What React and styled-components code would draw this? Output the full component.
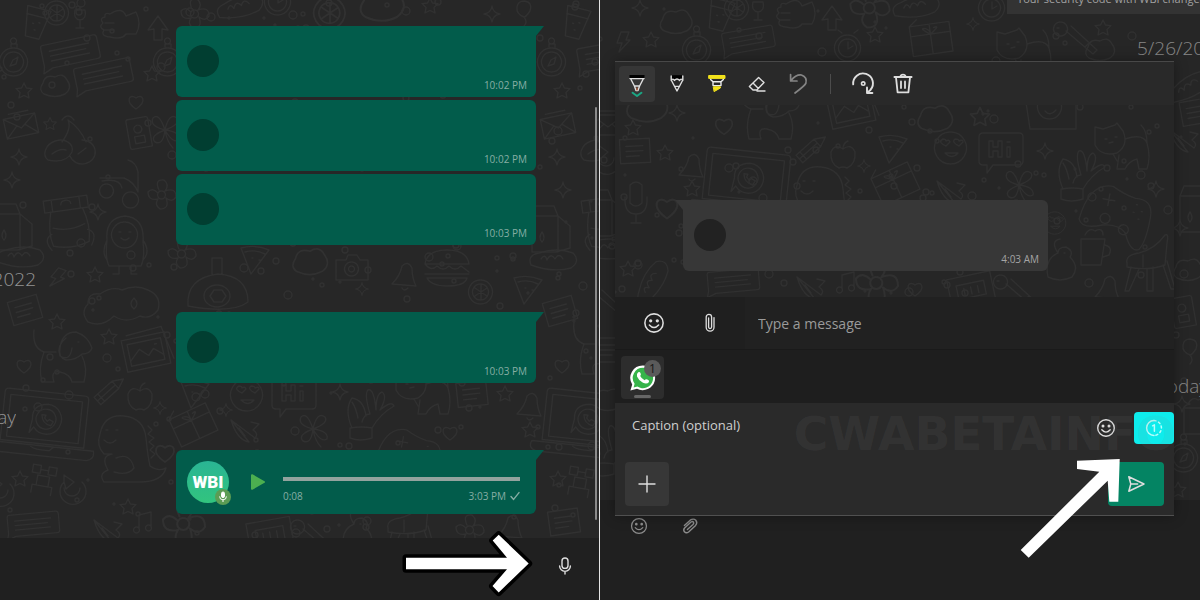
import React from "react";
import styled, { createGlobalStyle, css } from "styled-components";

const GlobalStyle = createGlobalStyle`
  * {
    box-sizing: border-box;
  }
  body {
    margin: 0;
    background: #272727;
    font-family: "Open Sans", "Noto Sans", sans-serif;
    color: #d4d4d4;
  }
  button,
  input {
    font: inherit;
    color: inherit;
    border: 0;
    margin: 0;
    padding: 0;
    background: none;
  }
  svg {
    display: block;
  }
`;

/* ---------- page ---------- */

const Page = styled.main`
  display: grid;
  grid-template-columns: 1fr 1fr;
  min-height: 100vh;
  overflow: hidden;
`;

const ChatPane = styled.section`
  position: relative;
  display: flex;
  flex-direction: column;
  min-width: 0;
  border-right: 1px solid #e4e4e4;
`;

const Messages = styled.div`
  position: relative;
  flex: 1;
  display: flex;
  flex-direction: column;
  padding: 26px 63px 24px 0;
  overflow: hidden;
`;

const WallpaperSvg = styled.svg`
  position: absolute;
  inset: 0;
  width: 100%;
  height: 100%;
  fill: none;
  stroke: ${p => p.$ink || "#313131"};
  stroke-width: 1.4;
  stroke-linecap: round;
  stroke-linejoin: round;
  pointer-events: none;
`;

const Scrollbar = styled.div`
  position: absolute;
  top: 107px;
  right: 2px;
  bottom: 80px;
  width: 2px;
  border-radius: 1px;
  background: #8a8a8a;
`;

/* ---------- bubbles ---------- */

const tail = css`
  &::after {
    content: "";
    position: absolute;
    top: 0;
    width: 8px;
    height: 10px;
    background: inherit;
    ${p => p.$incoming
      ? "right: 100%; clip-path: polygon(0 0, 100% 0, 100% 100%);"
      : "left: 100%; clip-path: polygon(0 0, 100% 0, 0 100%);"}
  }
`;

const Bubble = styled.article`
  position: relative;
  display: flex;
  align-items: center;
  align-self: flex-end;
  width: 360px;
  height: ${p => (p.$voice ? 64 : 71)}px;
  margin-bottom: ${p => (p.$stacked ? 3 : 0)}px;
  padding: 0 9px 0 11px;
  border-radius: 6px;
  background: ${p => (p.$incoming ? "#373737" : "#025c4b")};
  ${p => p.$tail && (p.$incoming ? "border-top-left-radius: 0;" : "border-top-right-radius: 0;")}
  ${p => p.$tail && tail}
`;

const Avatar = styled.span`
  width: 32px;
  height: 32px;
  margin-bottom: 2px;
  border-radius: 50%;
  background: ${p => (p.$incoming ? "#222222" : "#013e31")};
`;

const Time = styled.time`
  margin-left: auto;
  align-self: flex-end;
  padding-bottom: 5px;
  font-size: 10px;
  line-height: 14px;
  color: ${p => (p.$incoming ? "#a4a4a4" : "#86aea4")};
`;

const DateRow = styled.div`
  position: relative;
  display: flex;
  justify-content: flex-end;
  align-items: center;
  width: ${p => p.$visible}px;
  height: 67px;
  overflow: hidden;
  font-size: 19px;
  font-weight: 300;
  line-height: 28px;
  white-space: nowrap;
  color: #949494;
`;

const VoiceAvatar = styled.span`
  position: relative;
  display: grid;
  place-items: center;
  width: 42px;
  height: 42px;
  margin-right: 20px;
  border-radius: 50%;
  background: linear-gradient(#2ab594, #32c47e);
  color: #fff;
  font-family: Roboto, sans-serif;
  font-size: 17px;
  font-weight: 900;
`;

const MicBadge = styled.span`
  position: absolute;
  right: -2px;
  bottom: -2px;
  display: grid;
  place-items: center;
  width: 16px;
  height: 16px;
  border-radius: 50%;
  background: #5c9c54;
`;

const PlayButton = styled.button`
  width: 18px;
  height: 20px;
  margin-right: 16px;
`;

const Track = styled.div`
  flex: 1;
  display: flex;
  flex-direction: column;
  gap: 8px;
  margin-right: 7px;
  padding-top: 16px;
`;

const Seek = styled.input`
  appearance: none;
  display: block;
  width: 100%;
  height: 4px;
  background: #93a39e;
  &::-webkit-slider-thumb {
    appearance: none;
    width: 0;
    height: 0;
  }
`;

const TrackInfo = styled.div`
  display: flex;
  align-items: center;
  justify-content: space-between;
  font-size: 10px;
  line-height: 14px;
  color: #86aea4;
  span {
    display: flex;
    align-items: center;
    gap: 4px;
  }
`;

const ChatFooter = styled.footer`
  position: relative;
  display: flex;
  align-items: center;
  justify-content: flex-end;
  height: 62px;
  padding: 0 16px 6px 0;
  background: #202020;
`;

const IconButton = styled.button`
  display: grid;
  place-items: center;
  width: ${p => p.$w || 36}px;
  height: ${p => p.$h || 36}px;
  border-radius: 4px;
  background: ${p => p.$bg || "transparent"};
  color: ${p => p.$color || "#dedede"};
`;

const PointerRight = styled.svg`
  position: absolute;
  right: 63px;
  bottom: 2px;
  pointer-events: none;
`;

/* ---------- media dialog ---------- */

const MediaPane = styled.section`
  display: grid;
  min-width: 0;
  overflow: hidden;
  background: #262626;
`;

const Backdrop = styled.div`
  grid-area: 1 / 1;
  display: flex;
  flex-direction: column;
  min-width: 0;
`;

const BackdropChat = styled.div`
  position: relative;
  flex: 1;
  display: flex;
  flex-direction: column;
  align-items: flex-end;
  overflow: hidden;
`;

const Notice = styled.p`
  position: relative;
  width: 193px;
  height: 30px;
  margin: -16px 0 0;
  padding: 6px 10px;
  overflow: hidden;
  background: #333333;
  font-size: 11px;
  line-height: 18px;
  white-space: nowrap;
  color: #a2a2a2;
`;

const BackdropDate = styled(DateRow)`
  justify-content: ${p => (p.$end ? "flex-end" : "flex-start")};
  margin-top: ${p => (p.$end ? 271 : 0)}px;
  margin-right: ${p => (p.$end ? -8 : 0)}px;
  color: #868686;
`;

const BackdropFooter = styled.div`
  display: flex;
  gap: 15px;
  height: 100px;
  padding: 8px 21px;
  background: #202020;
`;

const Dialog = styled.div`
  position: relative;
  grid-area: 1 / 1;
  align-self: start;
  min-width: 0;
  margin: 61px 26px 0 15px;
  border-top: 1px solid #484848;
  border-bottom: 1px solid #505050;
  background: #1f1f1f;
  box-shadow: 0 0 12px rgba(0, 0, 0, 0.35);
`;

const Toolbar = styled.div`
  display: flex;
  align-items: center;
  gap: 4px;
  height: 43px;
  padding: 0 4px;
  background: #292929;
`;

const ToolDivider = styled.span`
  width: 1px;
  height: 20px;
  margin: 0 10px 0 11px;
  background: #4c4c4c;
`;

const Canvas = styled.div`
  position: relative;
  display: flex;
  height: 192px;
  padding: 95px 0 0 68px;
  overflow: hidden;
  background: #262626;
  ${Bubble} {
    align-self: flex-start;
    width: 365px;
  }
`;

const Composer = styled.div`
  display: flex;
  align-items: center;
  height: 53px;
  padding-left: 11px;
  border-bottom: 1px solid #1a1a1a;
`;

const MessageInput = styled.input`
  flex: 1;
  min-width: 0;
  height: 52px;
  margin-left: 7px;
  padding-left: 13px;
  background: #212121;
  font-size: 14px;
  line-height: 20px;
  &::placeholder {
    color: #9a9a9a;
    opacity: 1;
  }
`;

const Taskbar = styled.div`
  height: 53px;
  padding: 6px;
  background: #1e1e1e;
`;

const TaskItem = styled.button`
  position: relative;
  display: grid;
  place-items: center;
  width: 43px;
  height: 43px;
  border-radius: 4px;
  background: #2d2d2d;
  &::after {
    content: "";
    position: absolute;
    bottom: 1px;
    left: 13px;
    width: 17px;
    height: 3px;
    border-radius: 2px;
    background: #666;
  }
`;

const Count = styled.span`
  position: absolute;
  top: 4px;
  right: 3px;
  width: 17px;
  height: 17px;
  border-radius: 50%;
  background: #5a5a5a;
  color: #151515;
  font-size: 12px;
  line-height: 17px;
  text-align: center;
`;

const CaptionArea = styled.div`
  position: relative;
  padding-bottom: 9px;
  background: #2a2a2a;
`;

const CaptionRow = styled.div`
  display: flex;
  align-items: flex-start;
  height: 59px;
  padding: 9px 0 0 17px;
`;

const CaptionInput = styled.input`
  flex: 1;
  min-width: 0;
  height: 26px;
  font-size: 13px;
  line-height: 20px;
  &::placeholder {
    color: #cfcfcf;
    opacity: 1;
  }
`;

const ActionRow = styled.div`
  display: flex;
  justify-content: space-between;
  padding: 0 10px;
`;

const Watermark = styled.span`
  position: absolute;
  top: 3px;
  right: -2px;
  font-family: "DejaVu Sans", sans-serif;
  font-size: 47px;
  font-weight: 700;
  line-height: 56px;
  color: rgba(130, 130, 130, 0.11);
  pointer-events: none;
`;

const PointerUp = styled.svg`
  position: absolute;
  right: 48px;
  bottom: -49px;
  pointer-events: none;
`;

/* ---------- wallpaper ---------- */

const STAR = "M0-8 2.4-3 8-2.4 4 1.6 5 7 0 4.4-5 7-4 1.6-8-2.4-2.4-3Z";
const SPARK = "M0-8Q1-1 8 0Q1 1 0 8Q-1 1-8 0Q-1-1 0-8Z";

const motifs = {
  star: STAR,
  spark: SPARK,
  heart: "M0 7C-12-1-6-9 0-4C6-9 12-1 0 7Z",
  glass: "M-12-14 12-14 7 16-7 16ZM-11-6 11-6M-3 2h1M3 0h1M0 8h1",
  lemon: "M0-12A12 12 0 1 1-1-12M0-8A8 8 0 1 1-1-8M0-7V7M-6-4 6 4M6-4-6 4",
  wine: "M-5-8Q-7 1 0 2Q7 1 5-8ZM0 2V10M-4 10H4",
  fist: "M-10-10Q2-18 6-8L16-12Q22 0 16 10L6 10Q2 16-10 13Q-20 12-16 6Q-22 3-17-1Q-21-6-15-7Q-16-12-10-10ZM-15-1H-6M-15 6H-6",
  lines: "M-26-12H26Q29-12 29-9V9Q29 12 26 12H-20L-30 16-28 9V-9Q-28-12-26-12ZM-20-5H20M-20 0H16M-20 5H19",
  compass: "M0-14A14 14 0 1 1-1-14M0-10A10 10 0 1 1-1-10M-4 4-1-2 4-5 2 2ZM-3-15V-18H3V-15M0-24A3 3 0 1 1-1-24",
  cloud: "M-11 8Q-17 4-12-3Q-10-12 0-9Q8-14 12-6Q18 2 10 8Q0 13-11 8Z",
  envelope: "M-16-10H16V10H-16ZM-16-10 0 2 16-10M-16 10-4-1M16 10 4-1M-10-14H10",
  cherry: "M-18 14A14 11-20 1 1 6 6Q0 18-18 14ZM4 10A13 12 0 1 0 16-6M-4-4Q6-18 2-26Q14-18 20-4M-14 8Q-6 2 0 4M12 8 20 2M-4-26Q2-34 8-26",
  card: "M-9-15H9Q11-15 11-13V15H-9Q-11 15-11 13V-13Q-11-15-9-15ZM-5 3H5V10H-5ZM0-8A4 4 0 1 1-1-8",
  scooter: "M-20-4H4Q14 0 18 10V-10Q16-20 8-22M-14 2A7 7 0 1 0-13 2M10 10A8 8 0 1 0 11 10M-18-1Q0-4 2 6",
  backpack: "M-22-22H22V-10H-22ZM-16-10Q-22 10-18 24Q0 30 18 24Q22 8 16-10M-16 6Q0 12 16 6M-18 12Q-28 16-20 28M18 12Q28 16 20 28M-5-16A5 4 0 0 1 5-16M-14-22V-10M14-22V-10",
  kid: "M0-24Q20-22 18 2Q20 18 16 26H-16Q-20 18-18 0Q-20-22 0-24ZM0-18A13 13 0 1 1-1-18M-6-8h2M4-8h2M-4-2Q0 2 4-2M-18 0Q-24 12-18 20M18 0Q26 12 18 20M-6 26V34H-12M6 26V34H12",
  carton: "M-18-10H8L20 0V22L6 26H-18ZM-18-10-14-20H4L8-10V26M-8 6Q-12 12-8 16Q-4 12-8 6Z",
  bread: "M-22 4Q-26-6-14-8Q4-14 20-8Q28 0 18 7Q0 12-22 4ZM-12-2Q-8-8-6-1Q-2-9 2-2Q6-9 10-2",
  bolt: "M-2-10H6L3-2H7L-4 10-1 1H-6Z",
  flower: "M0-4A4 4 0 1 1-1-4M-3-5Q-8-16 2-15Q8-10 3-4Q14-8 14 2Q10 8 4 3Q8 14-2 14Q-8 10-4 4Q-14 6-14-3Q-10-8-4-2",
  helmet: "M-30 14Q-32-14 0-18Q30-16 30 10Q14 22-30 14ZM-14 4A13 11 0 1 0 12 4A13 11 0 1 0-14 4M-4-2 4-2 8 4 4 10-4 10-8 4ZM-6-18V-34H4V-18",
  camera: "M-16-8H-6L-4-13H5L8-8H16V12H-16ZM0-6A7 7 0 1 1-1-6M0-2A3 3 0 1 1-1-2",
  burger: "M-22-4Q-20-18 0-18Q20-18 22-4ZM-22-4Q-16 4-10-2Q-4 4 2-2Q8 4 14-2L22 4M-22 6H22M-20 10Q-16 18 0 18Q18 18 20 10Z",
  bell: "M-12 8Q-4 0-2-10Q4-16 8-8Q8 2 12 10ZM-2 12Q0 16 4 12",
  pizza: "M-14-10Q0-14 14-8L-4 16ZM-10-6Q0-9 10-4M-3 0h1M4 2h1",
  balloon: "M0-9Q9-8 6 1Q2 7 0 7Q-8 4-7-3Q-6-9 0-9ZM0 7Q4 12 0 16",
  note: "M-15-12H15V12H-15ZM-9-5H8M-9 0H8M-9 5H4",
  bear: "M-34 16Q-42 6-34-2Q-34-14-22-12Q-10-20 0-16Q14-22 26-16Q40-10 36 4Q28 14 18 10Q4 18-8 10Q-20 22-34 16ZM12-8Q6-2 12 3Q18-2 12-8Z",
  dog: "M-28-28Q-30-10-18-6H-6M-2-10Q0-26 14-26Q26-22 30-10Q28-4 20-4Q14 2 4 2Q-4 0-2-10ZM4-20Q-6-12-2-2Q8 4 10-10M-18-6Q-24 10-20 24H-8Q-12 12-2 14Q8 16 10 24H22Q26 10 20-2M16-16h1",
  photo: "M-22-16H22V16H-22ZM-17-11H17V11H-17ZM-17 6-6-4 2 4 8-2 17 6M10-6h2M-16-20 20-22 26 12",
  pencil: "M-16 4H8L18 0 8-6H-16ZM8-6V4M-11-6V4M-16-1H8",
  apple: "M0-7Q8-13 12-4Q13 8 4 12Q0 10-4 12Q-13 8-12-4Q-8-13 0-7ZM0-7Q0-13 5-15",
  laptop: "M-38-32H38Q42-32 42-28V20H-42V-28Q-42-32-38-32ZM-36-26H36V16H-36ZM-52 22H52Q54 30 46 32H-46Q-56 30-52 22ZM-12 22Q-10 26 0 26H8L12 22M2-20A15 15 0 1 1-10 4L-14 10-12-4Q-14-18 2-20ZM2-15A10 10 0 1 1 1-15M-3-9Q-2 0 7 1L9-3 5-5 3-3 0-6 1-9Z",
  dino: "M-30-14Q-26-34-6-32Q14-30 16-10Q18 10 20 18Q28 24 36 20Q32 34 10 34H-26Q-32 26-22 22Q-30 8-18 6H-26Q-34-2-30-14ZM-24-18h2M-14-18h2M-26-8Q-20-2-14-8M18-22 22-18 18-14 24-10 19-6 24-2 20 2 25 6 21 10M-14 10Q0 4 4 20Q-2 28-16 24",
  emoji: "M0-16A16 16 0 1 1-1-16M-5-2Q-14-6-8-9Q-5-9-5-7Q-2-9-1-6ZM8-2Q0-6 4-9Q8-9 8-7Q12-9 12-6ZM-6 5Q1 12 7 5Z",
  hi: "M-18-16H18Q22-16 22-12V12Q22 16 18 16H-8L-14 24V16H-18Q-22 16-22 12V-12Q-22-16-18-16ZM-12-8V8H-8V2H-3V8H1V-8H-3V-2H-8V-8ZM6-2H9V8H6ZM6-7H9",
  clover: "M0 0Q-16-4-12-12Q-6-18 0 0Q4-18 12-12Q16-6 0 0Q16 2 14 10Q8 14 0 0Q-2 16-10 12Q-16 6 0 0M0 0Q2 12 8 18",
  plant: "M-16 24V14Q-4 12 6 14V24Q-6 28-16 24ZM-14 14Q-22-4-14-16Q-2-14 0 2M6 14Q14 0 28-8Q26-14 14-4Q22-18 16-22Q10-20 10-4Q8-26 2-24Q-2-20 4 0Q-2 0-4 8M-14-12Q-10-6-8 4",
  gamepad: "M-34 14Q-30-24-6-24Q6-18 18-16Q36-18 36 0Q36 26 30 34Q22 38 14 20Q6 12-10 16Q-30 24-34 14ZM-8-16V-4M-14-10H-2M-8 4A5 5 0 1 1-9 4M12 12A5 5 0 1 1 11 12M20-10h1M26-4h1M18-2h1M24 4h1",
  cat: "M-28-20-20-18-8-22-6-24 0-16Q6-2-6 6Q-22 10-28-2ZM-18-8h2M-8-10h2M-14-4-10-5M2-8Q20-14 24-4Q24-16 18-22M24-4Q28 10 24 22H16L14 12Q6 14 2 22H-6L-4 8M-10 7-6 14",
  gift: "M-20-14H20V16H-20ZM-20-4H20M0-14V16M0-4Q-12-12-4-10Q0-8 0-4Q12-12 4-10M-20-14-12-20",
  drone: "M-12-14H-4V-6H-12ZM4-14H12V-6H4ZM-6-4H6V6H-6ZM-10 14V6H10V14M-4-10H4",
  rotate: "M-8-8A13 13 0 1 0 10-8M-8-2A7 7 0 1 0 8-2M-8-8V-15L2-8-6-1Z",
  music: "M-6 6A3 3 0 1 1-7 6M6 4A3 3 0 1 1 5 4M-4 8V-6L8-9V6",
  horn: "M-14-10 10 8Q14 4 8 0L14-6 6-8M-14-10Q-8 10 4 12ZM-6-2 0 6",
  mug: "M-12-12H12L8 14H-12ZM12-6Q20-4 16 4L10 6M-8-16Q-4-24 2-20Q10-24 10-16",
  chair: "M-22 0Q-24-8-10-10Q6-14 16-28Q20-30 18-20L16 2Q0 8-22 4ZM-18 4-24 28H-20L-10 6M-2 6V28H4V4M14 2 22 26H26L18-2M-6-8V4",
  key: "M-14-14A7 7 0 1 1-15-14M-9-5 18 18 22 14-4-10M10 11 14 7M-18-8h2",
  clock: "M0-13A13 13 0 1 1-1-13M0-9A9 9 0 1 1-1-9M0-6V1L5-2M-6-15-10-18M6-15 10-18",
  choco: "M-22-14H22V16H-22ZM-14-6H14V8H-14ZM-7-2V5M0-2V5M7-2V5",
  whale: "M-26-26H26V14H10L-20 14ZM0-20A12 12 0 1 1-1-20M-5-12h2M4-12h2M-5-4Q0 2 6-5M-26-26-20 14",
  mic: "M-6-16Q0-22 6-16V2Q0 8-6 2ZM-11-4Q-12 13 0 13Q12 13 11-4M0 13V22M-5 22H5",
  up: "M-10 4 0-10 10 4 4 3V14H-4V3Z",
  squirrel: "M-14 14Q-18-4-4-10Q-4-16 4-16Q12-12 8-6Q18 4 10 14Q-2 20-14 14ZM2-10h1M-4-10Q-12-22-2-24",
};

// [motif, x, y, rotation, scale]
const leftDoodles = [
  ["glass", 36, 22, 14], ["lemon", 57, 13], ["wine", 80, 18], ["fist", 120, 24], ["lines", 70, 52, -12],
  ["lines", 103, 75, -12], ["compass", 14, 62], ["cloud", 55, 86], ["star", 24, 91], ["star", 152, 74],
  ["heart", 136, 102], ["envelope", 21, 126, -12], ["star", 50, 124, 0, 0.8], ["cherry", 66, 146], ["card", 139, 133, -10],
  ["spark", 19, 157], ["spark", 12, 180], ["scooter", 120, 182], ["spark", 98, 212], ["backpack", 68, 220, -8],
  ["kid", 125, 240], ["carton", 12, 224], ["bread", 20, 258], ["bolt", 57, 278, 20], ["star", 95, 275],
  ["flower", 182, 254], ["helmet", 218, 292], ["pizza", 255, 258], ["camera", 352, 268],
  ["up", 158, 26], ["flower", 195, 14], ["bread", 240, 8, -15], ["clock", 278, 2], ["lemon", 330, 13, 0, 1.3],
  ["cloud", 382, 5, 0, 1.5], ["star", 430, 6], ["spark", 492, 14], ["balloon", 524, 10], ["glass", 576, 22, 14],
  ["compass", 552, 62], ["star", 562, 91], ["lines", 606, 56, -10], ["envelope", 558, 126, -12], ["spark", 557, 157],
  ["cherry", 602, 146], ["spark", 563, 190], ["carton", 550, 226], ["backpack", 606, 220, -8], ["bread", 553, 261],
  ["burger", 447, 268], ["bell", 404, 276], ["spark", 362, 289, 0, 0.8], ["compass", 168, 62], ["clover", 165, 130],
  ["flower", 162, 195], ["lemon", 481, 292], ["pizza", 528, 288], ["cloud", 310, 262, 0, 1.2],
  ["note", 25, 310, -16], ["bear", 122, 306], ["star", 57, 322], ["dog", 62, 358], ["star", 109, 337],
  ["heart", 24, 366], ["photo", 146, 352, -12], ["pencil", 110, 391, -42], ["apple", 140, 398], ["laptop", 44, 424, 6],
  ["dino", 130, 448], ["emoji", 247, 395], ["hi", 294, 393], ["clover", 313, 429], ["plant", 366, 414],
  ["gamepad", 408, 452, 10, 0.9], ["cat", 424, 392], ["note", 472, 394, -6], ["star", 505, 394], ["bell", 529, 406],
  ["star", 530, 430], ["laptop", 586, 424, 6], ["gift", 193, 424, -25], ["spark", 160, 408, 0, 0.8], ["spark", 226, 410, 0, 0.8],
  ["heart", 165, 453, 0, 1.3], ["star", 20, 479], ["drone", 43, 480, 10], ["rotate", 72, 490], ["lines", 33, 524, -5, 0.9],
  ["star", 128, 507], ["music", 143, 521], ["horn", 108, 530], ["flower", 184, 524, 0, 1.5], ["choco", 270, 534, -10],
  ["key", 312, 534], ["chair", 410, 528], ["squirrel", 358, 534], ["flower", 470, 530],
  ["note", 564, 522, -8], ["star", 558, 479], ["drone", 580, 482, 10], ["note", 560, 311, -16], ["dog", 602, 350],
  ["heart", 562, 366], ["pizza", 195, 392], ["horn", 245, 430], ["spark", 340, 392], ["heart", 450, 433],
  ["rotate", 0, 492], ["bell", 510, 528],
];

const rightDoodles = [
  ["spark", 40, 8], ["glass", 120, 14, 14], ["lemon", 137, 8], ["wine", 158, 10], ["cloud", 76, 22, 0, 1.1],
  ["bolt", 23, 42], ["star", 51, 40], ["fist", 196, 14], ["compass", 97, 50], ["lines", 148, 40, -10, 0.9],
  ["up", 232, 16], ["clock", 248, 48], ["star", 275, 35], ["flower", 270, 8, 0, 1.4], ["gift", 331, 38, -8],
  ["cat", 425, 52], ["key", 475, 36], ["star", 503, 28], ["clock", 392, 8], ["bread", 316, 8, -10],
  ["spark", 373, 24, 0, 0.8], ["cloud", 500, 50], ["note", 596, 112, -10], ["bread", 590, 88, -30],
  ["horn", 584, 140], ["carton", 598, 206], ["spark", 580, 228], ["cloud", 588, 270], ["card", 583, 312, -10],
  ["balloon", 590, 348], ["compass", 584, 458], ["mug", 596, 420], ["spark", 582, 404], ["star", 578, 490],
  ["envelope", 8, 125], ["rotate", 6, 160], ["carton", 4, 210], ["bread", 6, 250], ["key", 6, 300],
  ["note", 8, 350], ["cloud", 8, 400], ["plant", 8, 450],
];

// drawn behind the picture that is being edited, origin at the canvas corner
const canvasDoodles = [
  ["cloud", 32, 2, 0, 1.4], ["star", 18, 23], ["note", 20, 46, -3], ["star", 50, 48], ["spark", 62, 8],
  ["heart", 109, 21, 0, 1.2], ["dog", 154, 10], ["laptop", 131, 78, 6], ["bell", 76, 62], ["star", 77, 84],
  ["mic", 21, 96], ["pencil", 197, 44, -42], ["apple", 228, 51], ["photo", 236, 4, -12], ["dino", 212, 94],
  ["pizza", 278, 42], ["gift", 280, 78, -25], ["emoji", 336, 43], ["hi", 386, 44], ["spark", 249, 61, 0, 0.8],
  ["cloud", 320, 14, 0, 1.2], ["star", 365, 12, 0, 1.2], ["whale", 435, 10], ["cat", 508, 42], ["clover", 404, 80],
  ["plant", 462, 70], ["gamepad", 500, 106, 10], ["mug", 478, 146], ["chair", 534, 158], ["squirrel", 447, 158],
  ["emoji", 440, 118, 0, 0.7], ["spark", 541, 84], ["spark", 430, 46], ["lines", 118, 176, -5, 0.9], ["horn", 196, 182],
  ["music", 231, 176], ["flower", 262, 178, 0, 1.5], ["choco", 356, 184, -12], ["bell", 492, 184],
  ["star", 13, 164], ["bread", 38, 178, -60], ["heart", 52, 103, 0, 1.5], ["horn", 336, 86],
  ["key", 400, 184], ["heart", 300, 184],
];

const scatter = (count, width, height, seed) => {
  let s = seed;
  const next = () => {
    s = (s * 16807) % 2147483647;
    return s / 2147483647;
  };
  return Array.from({ length: count }, () => ({
    x: Math.round(next() * width),
    y: Math.round(next() * height),
    r: 1 + Math.round(next() * 3),
  }));
};

const Wallpaper = ({ items, dots, ink }) => (
  <WallpaperSvg $ink={ink} aria-hidden="true">
    {items.map(([name, x, y, rot = 0, scale = 1], i) => (
      <path
        key={i}
        d={motifs[name]}
        transform={`translate(${x} ${y}) rotate(${rot}) scale(${scale})`}
      />
    ))}
    {dots.map((d, i) => (
      <circle key={i} cx={d.x} cy={d.y} r={d.r} />
    ))}
  </WallpaperSvg>
);

const leftDots = scatter(230, 600, 540, 77);
const rightDots = scatter(130, 600, 500, 31);
const canvasDots = scatter(90, 560, 192, 53);

/* ---------- icons ---------- */

const Icon = ({ size = 20, children, ...rest }) => (
  <svg
    width={size}
    height={size}
    viewBox={`0 0 ${size} ${size}`}
    fill="none"
    stroke="currentColor"
    strokeWidth="1.4"
    strokeLinecap="round"
    strokeLinejoin="round"
    aria-hidden="true"
    {...rest}
  >
    {children}
  </svg>
);

const SmileIcon = ({ size = 20 }) => (
  <Icon size={size} viewBox="0 0 20 20">
    <circle cx="10" cy="10" r="8.3" />
    <circle cx="7" cy="8" r="0.8" fill="currentColor" />
    <circle cx="13" cy="8" r="0.8" fill="currentColor" />
    <path d="M5.8 11.8Q10 16.4 14.2 11.8" />
  </Icon>
);

const ClipIcon = () => (
  <Icon strokeWidth="1.3">
    <path d="M6.2 4.8V14.2a3.9 3.9 0 0 0 7.8 0V4.6M6.2 4.8V4a2.7 2.7 0 0 1 5.4 0V14a1.5 1.5 0 0 1-3 0V5" />
  </Icon>
);

const SlantClipIcon = () => (
  <Icon size={18}>
    <path d="M3.4 8.6 9.2 3.2Q12.4 1 14.8 3.2Q16.8 5.8 14.6 8.4L7.6 15Q5.2 16.6 3.4 14.8Q2 12.8 3.6 11L10 5Q11.8 4 12.6 5.4Q13 6.6 12 7.6L6.4 12.6" />
  </Icon>
);

const MicIcon = () => (
  <Icon>
    <rect x="7" y="2" width="6" height="10.4" rx="3" />
    <path d="M4.6 10a5.4 5.4 0 0 0 10.8 0M10 15.4V18" />
  </Icon>
);

const PenIcon = () => (
  <Icon size={26}>
    <path d="M6 7.5H20M7 8.5 10.4 15H15.6L19 8.5M10.4 15 12 19.6H14L15.6 15" stroke="#e0e0e0" />
    <path d="M5.5 5.5H20.5" stroke="#000" strokeWidth="3" strokeLinecap="butt" />
    <path d="M13 17v2" stroke="#b06040" />
    <path d="M8.6 21.8 13 25 17.4 21.8" stroke="#1aa784" strokeWidth="2" />
  </Icon>
);

const PencilIcon = () => (
  <Icon size={26}>
    <path d="M7.6 4.2H18.4V8H7.6Z" fill="#000" stroke="none" />
    <path d="M7.2 5V9L13 20 18.8 9V5M7.2 9.4Q9 6.8 10.4 9.4Q13 6.8 15.6 9.4Q17 6.8 18.8 9.4M10.6 15.4H15.4" stroke="#e0e0e0" />
  </Icon>
);

const MarkerIcon = () => (
  <Icon size={26}>
    <path d="M5 4.5H21V7.4H5Z" fill="#f2e21b" stroke="#f2e21b" strokeWidth="1" />
    <path d="M6.6 8.4 9 10.8V14.6H17V10.8L19.4 8.4M9 10.8H17" stroke="#ececec" />
    <path d="M9.6 15.8H16.4V17L10.4 20.4Z" fill="#f2e21b" stroke="#f2e21b" strokeWidth="1" />
  </Icon>
);

const EraserIcon = () => (
  <Icon size={22}>
    <path d="M12.6 4.4 18 9.6 10.8 17H7L3.4 13.4ZM7 10 12.4 15.4M11 18H19" />
  </Icon>
);

const UndoIcon = () => (
  <Icon size={24} strokeWidth="1.7">
    <path d="M5.6 2.6V9H12M6 8.6Q11 2.4 16.4 3Q22.6 5.2 20.8 11.4Q20 13.6 10 21" />
  </Icon>
);

const RotateIcon = () => (
  <Icon size={26} strokeWidth="1.9">
    <path d="M3.2 13.4A9.9 9.9 0 1 1 20.4 19L17.4 21.6M17 16.4V22H22.4" />
    <circle cx="13.2" cy="12.6" r="1.7" strokeWidth="1.6" />
  </Icon>
);

const TrashIcon = () => (
  <Icon size={24} strokeWidth="1.8">
    <path d="M3.4 5H20.6M5 5.4 6.6 20.4H17.4L19 5.4M9.4 4.6Q9.8 2.6 12 2.6Q14.2 2.6 14.6 4.6M10 9.4V16M14 9.4V16" />
  </Icon>
);

const SendIcon = () => (
  <Icon size={20} strokeWidth="1.5">
    <path d="M2.8 2.8 18 10 2.8 17.2 4.8 10ZM4.8 10H11.6" />
  </Icon>
);

const OnceIcon = () => (
  <Icon size={18} strokeWidth="1.5">
    <path d="M9 1.6A7.4 7.4 0 0 0 9 16.4" />
    <path d="M9 1.6A7.4 7.4 0 0 1 9 16.4" strokeDasharray="2 2.8" />
    <path d="M7.6 6.8 9.4 5.8V12.2" />
  </Icon>
);

const WhatsAppIcon = () => (
  <Icon size={28}>
    <path d="M14 1.4A12.4 12.4 0 1 1 8 24.8L1.4 26.6 3.2 20.4A12.4 12.4 0 0 1 14 1.4Z" fill="#fff" stroke="none" />
    <path d="M14 3.8A10.2 10.2 0 1 1 8.4 22.6L4.6 23.6 5.6 19.8A10.2 10.2 0 0 1 14 3.8Z" fill="#36b44a" stroke="none" />
    <path d="M9.2 8.2Q10.8 7.4 11.6 9.2Q12.4 10.8 11.2 12Q12.6 14.8 15.6 16.2Q16.8 14.8 18.4 15.6Q20.6 16.6 20 18Q18 20.6 14 18.8Q9.6 16.4 8 12.4Q7.4 9.4 9.2 8.2Z" fill="#fff" stroke="none" />
  </Icon>
);

/* ---------- app ---------- */

const tools = [
  { label: "Pen", icon: <PenIcon />, active: true },
  { label: "Pencil", icon: <PencilIcon /> },
  { label: "Highlighter", icon: <MarkerIcon /> },
  { label: "Eraser", icon: <EraserIcon /> },
  { label: "Undo", icon: <UndoIcon />, muted: true },
];

const Message = ({ time, incoming, hasTail, stacked }) => (
  <Bubble $incoming={incoming} $tail={hasTail} $stacked={stacked}>
    <Avatar $incoming={incoming} />
    <Time $incoming={incoming}>{time}</Time>
  </Bubble>
);

const VoiceMessage = () => (
  <Bubble $voice $tail>
    <VoiceAvatar>
      WBI
      <MicBadge>
        <svg width="12" height="12" viewBox="0 0 12 12" fill="none" stroke="#fff">
          <rect x="4.5" y="1" width="3" height="5.6" rx="1.5" fill="#fff" />
          <path d="M2.6 5.4a3.4 3.4 0 0 0 6.8 0M6 9V11" />
        </svg>
      </MicBadge>
    </VoiceAvatar>
    <PlayButton aria-label="Play voice message">
      <svg width="18" height="20" viewBox="0 0 18 20">
        <path d="M3 3.2 15 10 3 16.8Z" fill="#4caf50" stroke="#4caf50" strokeWidth="2" strokeLinejoin="round" />
      </svg>
    </PlayButton>
    <Track>
      <Seek type="range" min="0" max="8" defaultValue="0" aria-label="Seek" />
      <TrackInfo>
        <span>0:08</span>
        <span>
          3:03 PM
          <Icon size={10}>
            <path d="M1 5.6 3.6 8.4 9 1.6" />
          </Icon>
        </span>
      </TrackInfo>
    </Track>
  </Bubble>
);

const Conversation = () => (
  <ChatPane>
    <Messages>
      <Wallpaper items={leftDoodles} dots={leftDots} />
      <Message time="10:02 PM" hasTail stacked />
      <Message time="10:02 PM" stacked />
      <Message time="10:03 PM" />
      <DateRow $visible={36}>2022</DateRow>
      <Message time="10:03 PM" hasTail />
      <DateRow $visible={16}>ay</DateRow>
      <VoiceMessage />
    </Messages>
    <Scrollbar />
    <ChatFooter>
      <IconButton aria-label="Record voice message">
        <MicIcon />
      </IconButton>
      <PointerRight width="136" height="70" viewBox="400 528 136 70" aria-hidden="true">
        <path
          d="M406 557.7H507L492.7 540.5 498.7 534.7 528.7 563.5 498.7 592.5 492.5 586 507 569.3H406Z"
          fill="#fff"
          stroke="#000"
          strokeWidth="7"
          strokeLinejoin="round"
          paintOrder="stroke"
        />
      </PointerRight>
    </ChatFooter>
  </ChatPane>
);

const MediaEditor = () => (
  <MediaPane>
    <Backdrop>
      <BackdropChat>
        <Wallpaper items={rightDoodles} dots={rightDots} ink="#303030" />
        <Notice>Your security code with WBI changed</Notice>
        <BackdropDate $visible={63}>5/26/2022</BackdropDate>
        <BackdropDate $visible={38} $end>Today</BackdropDate>
      </BackdropChat>
      <BackdropFooter>
        <IconButton aria-label="Emoji" $color="#8c8c8c">
          <SmileIcon size={18} />
        </IconButton>
        <IconButton aria-label="Attach" $color="#8c8c8c">
          <SlantClipIcon />
        </IconButton>
      </BackdropFooter>
    </Backdrop>

    <Dialog>
      <Toolbar>
        {tools.map(t => (
          <IconButton
            key={t.label}
            aria-label={t.label}
            $bg={t.active ? "#363636" : undefined}
            $color={t.muted ? "#858585" : undefined}
          >
            {t.icon}
          </IconButton>
        ))}
        <ToolDivider />
        <IconButton aria-label="Rotate"><RotateIcon /></IconButton>
        <IconButton aria-label="Delete"><TrashIcon /></IconButton>
      </Toolbar>

      <Canvas>
        <Wallpaper items={canvasDoodles} dots={canvasDots} ink="#303030" />
        <Message time="4:03 AM" incoming hasTail />
      </Canvas>

      <Composer>
        <IconButton $w={56} aria-label="Emoji"><SmileIcon size={22} /></IconButton>
        <IconButton $w={56} aria-label="Attach"><ClipIcon /></IconButton>
        <MessageInput aria-label="Message" placeholder="Type a message" />
      </Composer>

      <Taskbar>
        <TaskItem aria-label="WhatsApp">
          <WhatsAppIcon />
          <Count>1</Count>
        </TaskItem>
      </Taskbar>

      <CaptionArea>
        <CaptionRow>
          <CaptionInput aria-label="Caption" placeholder="Caption (optional)" />
          <IconButton $w={57} $h={32} aria-label="Emoji"><SmileIcon /></IconButton>
          <IconButton $w={40} $h={32} $bg="#0eecec" $color="#b9fdfb" aria-label="View once">
            <OnceIcon />
          </IconButton>
        </CaptionRow>
        <ActionRow>
          <IconButton $w={44} $h={44} $bg="#373737" aria-label="Add">
            <Icon><path d="M10 2V18M2 10H18" /></Icon>
          </IconButton>
          <IconButton $w={56} $h={44} $bg="#048463" aria-label="Send"><SendIcon /></IconButton>
        </ActionRow>
        <Watermark aria-hidden="true">CWABETAINFO</Watermark>
      </CaptionArea>

      <PointerUp width="110" height="108" viewBox="1016 456 110 108" aria-hidden="true">
        <path
          d="M1020.7 550 1028.7 557.7 1107.7 480.7 1109.3 501.7H1118.3L1119.7 459 1077 460.7V469L1099.3 471.7Z"
          fill="#fff"
        />
      </PointerUp>
    </Dialog>
  </MediaPane>
);

const App = () => (
  <>
    <GlobalStyle />
    <Page>
      <Conversation />
      <MediaEditor />
    </Page>
  </>
);

export default App;
